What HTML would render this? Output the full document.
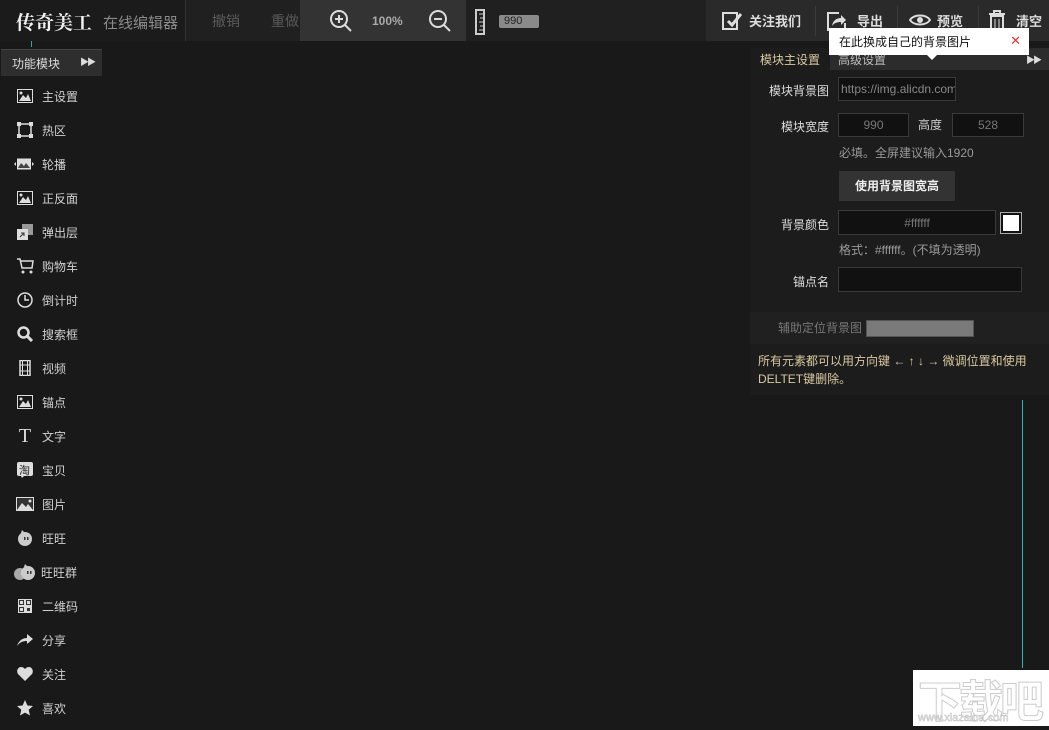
<!DOCTYPE html>
<html><head><meta charset="utf-8"><style>
*{margin:0;padding:0;box-sizing:border-box}
body{width:1049px;height:726px;overflow:hidden;background:#191919;font-family:"Liberation Sans","Noto Sans CJK SC",sans-serif;font-size:12px;color:#ccc;position:relative}
.a{position:absolute}
.top{left:0;top:0;width:1049px;height:41px;background:#262626}
.side .it{position:absolute;left:16px;height:20px;display:flex;align-items:center;color:#d0d0d0;font-size:12px}
.side .ic{width:18px;height:16px;margin-right:8px;display:flex;align-items:center;justify-content:center}
.inp{position:absolute;background:#111;border:1px solid #3a3a3a;color:#777;font-size:12px;display:flex;align-items:center;justify-content:center}
.lbl{position:absolute;color:#ddd;font-size:12px;text-align:right;width:80px}
</style></head><body>
<div class="a top"></div>
<div class="a" style="left:0;top:0;width:185px;height:41px;background:#1b1b1b"></div>
<div class="a" style="left:16px;top:8px;font-size:19px;font-weight:bold;color:#f2f2f2;font-family:'Noto Serif CJK SC',serif">传奇美工</div>
<div class="a" style="left:103px;top:12px;font-size:15px;color:#8a8a8a">在线编辑器</div>
<div class="a" style="left:185px;top:0;width:1px;height:41px;background:#333"></div>
<div class="a" style="left:186px;top:0;width:114px;height:41px;background:#202020"></div>
<div class="a" style="left:212px;top:11px;font-size:14px;color:#5a5a5a">撤销</div>
<div class="a" style="left:271px;top:11px;font-size:14px;color:#5a5a5a">重做</div>
<div class="a" style="left:300px;top:0;width:166px;height:41px;background:#333"></div>
<svg class="a" style="left:329px;top:9px" width="24" height="24"><circle cx="10" cy="10" r="8" fill="none" stroke="#ddd" stroke-width="2"/><path d="M15.5 15.5L22 22M6 10h8M10 6v8" stroke="#ddd" stroke-width="2"/></svg>
<div class="a" style="left:372px;top:14px;font-size:12px;font-weight:bold;color:#aaa">100%</div>
<svg class="a" style="left:428px;top:9px" width="24" height="24"><circle cx="10" cy="10" r="8" fill="none" stroke="#ddd" stroke-width="2"/><path d="M15.5 15.5L22 22M6 10h8" stroke="#ddd" stroke-width="2"/></svg>
<div class="a" style="left:466px;top:0;width:240px;height:41px;background:#202020"></div>
<svg class="a" style="left:473px;top:9px" width="14" height="26"><rect x="3" y="1" width="8" height="24" fill="none" stroke="#ccc" stroke-width="2"/><path d="M6 5h4M7 9h3M6 13h4M7 17h3M6 21h4" stroke="#ccc"/></svg>
<div class="a" style="left:499px;top:15px;width:40px;height:13px;background:#8a8a8a;border-radius:2px;color:#222;font-size:11px;padding-left:5px;line-height:13px">990</div>
<div class="a" style="left:706px;top:0;width:343px;height:41px;background:#2a2a2a"></div>
<svg class="a" style="left:722px;top:11px" width="20" height="20"><rect x="1" y="2" width="14" height="16" fill="none" stroke="#ddd" stroke-width="2"/><path d="M6 10l4 4 9-11" stroke="#ddd" stroke-width="3" fill="none"/></svg>
<div class="a" style="left:749px;top:11px;font-size:13px;color:#ddd;font-weight:bold">关注我们</div>
<div class="a" style="left:815px;top:6px;width:1px;height:30px;background:#3a3a3a"></div>
<svg class="a" style="left:827px;top:11px" width="20" height="20"><path d="M12 2H1v17h17v-7" fill="none" stroke="#ddd" stroke-width="2"/><path d="M5 15c1-6 5-8 9-8V4l5 5-5 5v-3c-4 0-7 1-9 4z" fill="#ddd"/></svg>
<div class="a" style="left:857px;top:11px;font-size:13px;color:#ddd;font-weight:bold">导出</div>
<div class="a" style="left:897px;top:6px;width:1px;height:30px;background:#3a3a3a"></div>
<svg class="a" style="left:909px;top:13px" width="22" height="14"><path d="M1 7C5 1 17 1 21 7 17 13 5 13 1 7z" fill="none" stroke="#ddd" stroke-width="2"/><circle cx="11" cy="7" r="3" fill="#ddd"/></svg>
<div class="a" style="left:937px;top:11px;font-size:13px;color:#ddd;font-weight:bold">预览</div>
<div class="a" style="left:978px;top:6px;width:1px;height:30px;background:#3a3a3a"></div>
<svg class="a" style="left:988px;top:10px" width="18" height="22"><path d="M1 4h16M6 4V1h6v3M3 6h12v15H3z" fill="none" stroke="#ddd" stroke-width="2"/><path d="M7 9v9M11 9v9" stroke="#ddd"/></svg>
<div class="a" style="left:1016px;top:11px;font-size:13px;color:#ddd;font-weight:bold">清空</div>
<div class="a" style="left:31px;top:41px;width:1px;height:6px;background:#2aa"></div>
<div class="a" style="left:1px;top:49px;width:101px;height:27px;background:#2e2e2e;border-top:1px solid #444;color:#ddd;font-size:12px;padding:5px 0 0 11px">功能模块<span style="position:absolute;left:79px;top:5px;font-size:9px;letter-spacing:-2px">▶▶</span></div>
<div class="side">
<div class="it" style="top:86px"><span class="ic"><svg width="16" height="14"><rect x="0.5" y="0.5" width="15" height="13" fill="none" stroke="#ddd"/><path d="M2 12l4-6 3 3 2-4 3 7z" fill="#ddd"/><circle cx="4" cy="4" r="1.5" fill="#ddd"/></svg></span>主设置</div>
<div class="it" style="top:120px"><span class="ic"><svg width="16" height="16"><rect x="2" y="2" width="12" height="12" fill="none" stroke="#ddd" stroke-width="1.5"/><rect x="0" y="0" width="4" height="4" fill="#ddd"/><rect x="12" y="0" width="4" height="4" fill="#ddd"/><rect x="0" y="12" width="4" height="4" fill="#ddd"/><rect x="12" y="12" width="4" height="4" fill="#ddd"/></svg></span>热区</div>
<div class="it" style="top:154px;left:14px"><span class="ic" style="width:20px;margin-right:8px"><svg width="20" height="12"><rect x="3" y="0.5" width="14" height="11" fill="#ddd"/><path d="M4 10l3-5 3 3 2-3 4 5z" fill="#444"/><path d="M0 6l2-2v4zM20 6l-2-2v4z" fill="#ddd"/></svg></span>轮播</div>
<div class="it" style="top:188px"><span class="ic"><svg width="16" height="14"><rect x="0.5" y="0.5" width="15" height="13" fill="none" stroke="#ddd"/><path d="M2 12l4-6 3 3 2-4 3 7z" fill="#ddd"/><circle cx="4" cy="4" r="1.5" fill="#ddd"/></svg></span>正反面</div>
<div class="it" style="top:222px"><span class="ic"><svg width="16" height="16"><rect x="5" y="0" width="11" height="11" fill="#999"/><rect x="0" y="5" width="11" height="11" fill="#ddd"/><path d="M3 13l4-4M4 9h3v3" stroke="#333" fill="none"/></svg></span>弹出层</div>
<div class="it" style="top:256px"><span class="ic"><svg width="17" height="16"><path d="M0 1h3l2 9h10l1-7H4" fill="none" stroke="#ddd" stroke-width="1.5"/><circle cx="6" cy="14" r="1.5" fill="#ddd"/><circle cx="14" cy="14" r="1.5" fill="#ddd"/></svg></span>购物车</div>
<div class="it" style="top:290px"><span class="ic"><svg width="16" height="16"><circle cx="8" cy="8" r="7" fill="none" stroke="#ddd" stroke-width="1.5"/><path d="M8 3v5h4" fill="none" stroke="#ddd" stroke-width="1.5"/></svg></span>倒计时</div>
<div class="it" style="top:324px"><span class="ic"><svg width="16" height="16"><circle cx="6.5" cy="6.5" r="5" fill="none" stroke="#ddd" stroke-width="2.5"/><path d="M10 10l5 5" stroke="#ddd" stroke-width="3"/></svg></span>搜索框</div>
<div class="it" style="top:358px"><span class="ic"><svg width="12" height="16"><rect x="1" y="0.5" width="10" height="15" fill="none" stroke="#ddd" stroke-width="1.5"/><path d="M3.5 1v14M8.5 1v14M1 5h10M1 11h10" stroke="#ddd"/></svg></span>视频</div>
<div class="it" style="top:392px"><span class="ic"><svg width="16" height="14"><rect x="0.5" y="0.5" width="15" height="13" fill="none" stroke="#ddd"/><path d="M2 12l4-6 3 3 2-4 3 7z" fill="#ddd"/><circle cx="4" cy="4" r="1.5" fill="#ddd"/></svg></span>锚点</div>
<div class="it" style="top:426px"><span class="ic" style="font-family:'Liberation Serif',serif;font-size:20px;color:#ddd">T</span>文字</div>
<div class="it" style="top:460px"><span class="ic"><svg width="16" height="16"><rect x="0" y="0" width="16" height="14" rx="2" fill="#ddd"/><text x="2" y="12" font-size="11" fill="#222" font-family="Noto Sans CJK SC">淘</text><path d="M4 14l1 2 2-2z" fill="#ddd"/></svg></span>宝贝</div>
<div class="it" style="top:494px"><span class="ic"><svg width="18" height="14"><rect x="0" y="0" width="18" height="14" fill="#ddd"/><rect x="1" y="1" width="16" height="12" fill="#333"/><path d="M1 13l5-7 4 4 2-3 5 6z" fill="#ddd"/><circle cx="14" cy="4" r="1.5" fill="#ddd"/></svg></span>图片</div>
<div class="it" style="top:528px"><span class="ic"><svg width="16" height="16"><circle cx="8" cy="9" r="7" fill="#ccc"/><path d="M4 3l1-3 3 3z" fill="#ccc"/><rect x="7" y="7" width="1.5" height="3" fill="#333"/><rect x="10" y="7" width="1.5" height="3" fill="#333"/></svg></span>旺旺</div>
<div class="it" style="top:562px;left:13px"><span class="ic" style="width:22px;margin-right:6px"><svg width="22" height="16"><circle cx="7" cy="10" r="6" fill="#aaa"/><circle cx="15" cy="9" r="7" fill="#ccc"/><path d="M11 3l1-3 3 3z" fill="#ccc"/><rect x="14" y="7" width="1.5" height="3" fill="#333"/><rect x="17" y="7" width="1.5" height="3" fill="#333"/></svg></span>旺旺群</div>
<div class="it" style="top:596px"><span class="ic"><svg width="14" height="14"><rect width="14" height="14" fill="#ddd"/><rect x="1" y="1" width="5" height="5" fill="#333"/><rect x="8" y="1" width="5" height="5" fill="#333"/><rect x="1" y="8" width="5" height="5" fill="#333"/><rect x="2" y="2" width="3" height="3" fill="#ddd"/><rect x="9" y="2" width="3" height="3" fill="#ddd"/><rect x="2" y="9" width="3" height="3" fill="#ddd"/><rect x="9" y="9" width="3" height="3" fill="#333"/></svg></span>二维码</div>
<div class="it" style="top:630px"><span class="ic"><svg width="16" height="12"><path d="M0 12C2 6 6 4 10 4V0l6 5-6 5V7C6 7 3 8 0 12z" fill="#ddd"/></svg></span>分享</div>
<div class="it" style="top:664px"><span class="ic"><svg width="16" height="14"><path d="M8 14L1 7C-1 4 1 0 4 0c2 0 3 1 4 2 1-1 2-2 4-2 3 0 5 4 3 7z" fill="#ddd"/></svg></span>关注</div>
<div class="it" style="top:698px"><span class="ic"><svg width="16" height="16"><path d="M8 0l2.4 5.5 5.6.5-4.3 3.8 1.3 5.7L8 12.6 3 15.5l1.3-5.7L0 6l5.6-.5z" fill="#ddd"/></svg></span>喜欢</div>
</div>
<div class="a" style="left:750px;top:48px;width:299px;height:347px;background:#1c1c1c"></div>
<div class="a" style="left:750px;top:48px;width:80px;height:22px;color:#d9c9a0;padding:3px 0 0 10px">模块主设置</div>
<div class="a" style="left:830px;top:48px;width:219px;height:22px;background:#2c2c2c;color:#bbb;padding:3px 0 0 8px">高级设置<span style="position:absolute;left:196px;top:5px;font-size:9px;letter-spacing:-2px;color:#ddd">▶▶</span></div>
<div class="a" style="left:829px;top:28px;width:200px;height:27px;background:#fff;color:#111;font-size:12px;padding:5px 0 0 10px">在此换成自己的背景图片<span style="position:absolute;right:8px;top:5px;color:#e33;font-size:13px">✕</span></div>
<div class="a" style="left:926px;top:54px;width:0;height:0;border-left:6px solid transparent;border-right:6px solid transparent;border-top:6px solid #fff"></div>
<div class="lbl" style="left:749px;top:82px">模块背景图</div>
<div class="inp" style="left:838px;top:77px;width:118px;height:24px;justify-content:flex-start;padding-left:2px;color:#888;overflow:hidden;white-space:nowrap">https://img.alicdn.com</div>
<div class="lbl" style="left:749px;top:118px">模块宽度</div>
<div class="inp" style="left:838px;top:113px;width:71px;height:24px">990</div>
<div class="a" style="left:918px;top:116px;color:#ccc">高度</div>
<div class="inp" style="left:952px;top:113px;width:72px;height:24px">528</div>
<div class="a" style="left:839px;top:144px;color:#999">必填。全屏建议输入1920</div>
<div class="a" style="left:839px;top:171px;width:116px;height:30px;background:#333;color:#eee;font-weight:bold;text-align:center;line-height:30px">使用背景图宽高</div>
<div class="lbl" style="left:749px;top:216px">背景颜色</div>
<div class="inp" style="left:838px;top:210px;width:158px;height:25px">#ffffff</div>
<div class="a" style="left:1000px;top:212px;width:22px;height:22px;border:1px solid #aaa;background:#111;padding:2px"><div style="width:16px;height:16px;background:#fff"></div></div>
<div class="a" style="left:839px;top:241px;color:#999">格式：#ffffff。(不填为透明)</div>
<div class="lbl" style="left:749px;top:273px">锚点名</div>
<div class="inp" style="left:838px;top:267px;width:184px;height:25px"></div>
<div class="a" style="left:750px;top:312px;width:299px;height:32px;background:#202020"></div>
<div class="a" style="left:778px;top:319px;color:#777">辅助定位背景图</div>
<div class="a" style="left:866px;top:320px;width:108px;height:17px;background:#7a7a7a;border:1px solid #555"></div>
<div class="a" style="left:758px;top:352px;color:#d9c9a0;line-height:18px;width:290px">所有元素都可以用方向键 ← ↑ ↓ → 微调位置和使用DELTET键删除。</div>
<div class="a" style="left:1022px;top:400px;width:1px;height:268px;background:#2bb"></div>
<div class="a" style="left:913px;top:670px;width:136px;height:56px;background:#fff"></div>
<div class="a" style="left:918px;top:666px;font-size:44px;font-weight:bold;color:#fff;-webkit-text-stroke:1px #ccc;letter-spacing:-3px">下载吧</div>
<div class="a" style="left:918px;top:712px;font-size:11px;color:#fff;-webkit-text-stroke:0.5px #bbb">www.xiazaiba.com</div>
</body></html>
